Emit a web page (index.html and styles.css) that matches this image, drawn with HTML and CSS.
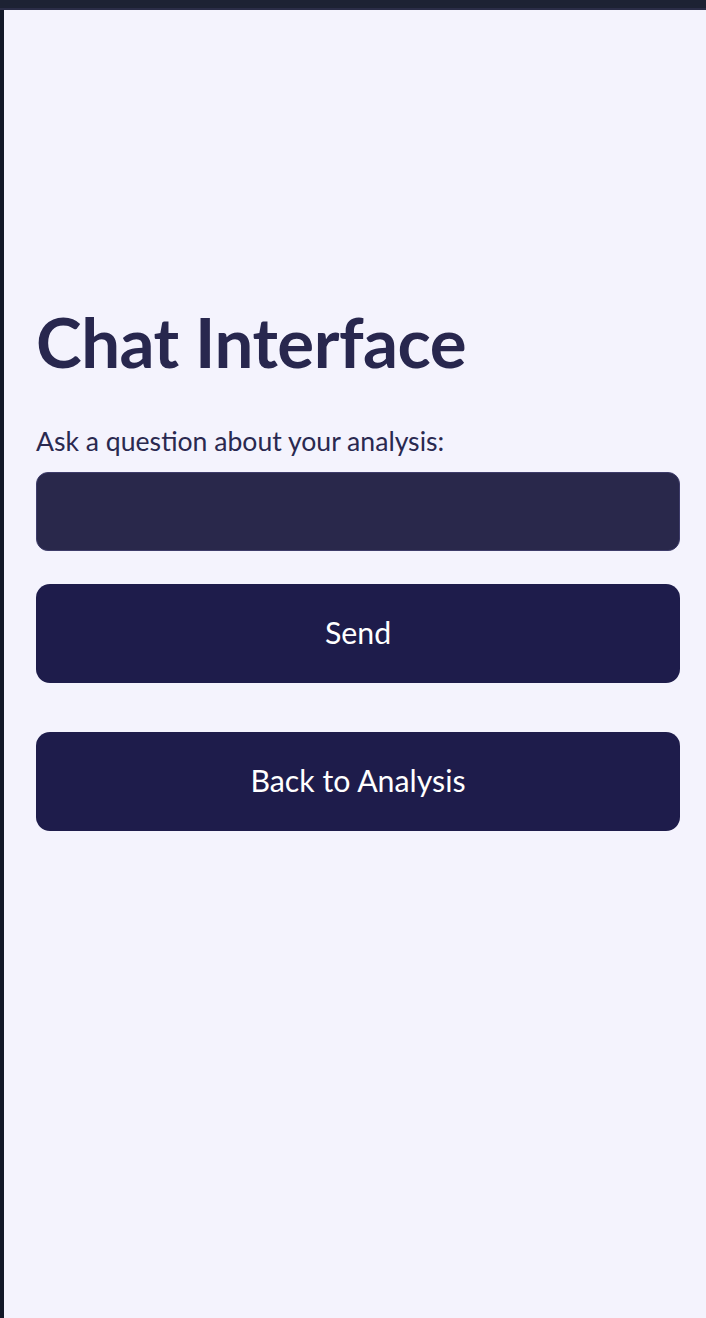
FILE: index.html
```html
<!DOCTYPE html>
<html lang="en">
<head>
<meta charset="utf-8">
<title>Chat Interface</title>
<link rel="stylesheet" href="styles.css">
</head>
<body>
<div class="topbar"></div>
<div class="app">
  <div class="rail"></div>
  <main class="main">
    <h1 class="title">Chat Interface</h1>
    <label class="label" for="q">Ask a question about your analysis:</label>
    <input id="q" class="input" type="text">
    <button class="btn btn-send">Send</button>
    <button class="btn btn-back">Back to Analysis</button>
  </main>
</div>
</body>
</html>
```
FILE: styles.css
```css
html, body {
  margin: 0;
  padding: 0;
  height: 100%;
}
body {
  background: #f4f3fd;
  font-family: Lato, "Noto Sans", sans-serif;
  display: flex;
  flex-direction: column;
}
.topbar {
  height: 8px;
  background: #1d2233;
  border-bottom: 2px solid #2b2d47;
  flex: none;
}
.app {
  flex: 1;
  display: flex;
}
.rail {
  width: 4px;
  background: #121828;
  flex: none;
}
.main {
  flex: 1;
  display: flex;
  flex-direction: column;
  padding: 282px 26px 0 32px;
}
.title {
  margin: 0;
  font-size: 69px;
  line-height: 100px;
  font-weight: 700;
  color: #28274e;
  letter-spacing: -0.5px;
}
.label {
  margin-top: 31px;
  font-size: 26.6px;
  line-height: 36px;
  color: #2a2950;
}
.input {
  margin-top: 13px;
  height: 79px;
  box-sizing: border-box;
  background: #29284b;
  border: 1px solid #3e3c6a;
  border-radius: 12px;
  outline: none;
}
.btn {
  height: 99px;
  border: none;
  border-radius: 14px;
  background: #1e1c4b;
  color: #ffffff;
  font-family: Lato, "Noto Sans", sans-serif;
  font-size: 30.3px;
  padding: 0 0 4px 0;
}
.btn-send {
  margin-top: 33px;
}
.btn-back {
  margin-top: 49px;
}
```
